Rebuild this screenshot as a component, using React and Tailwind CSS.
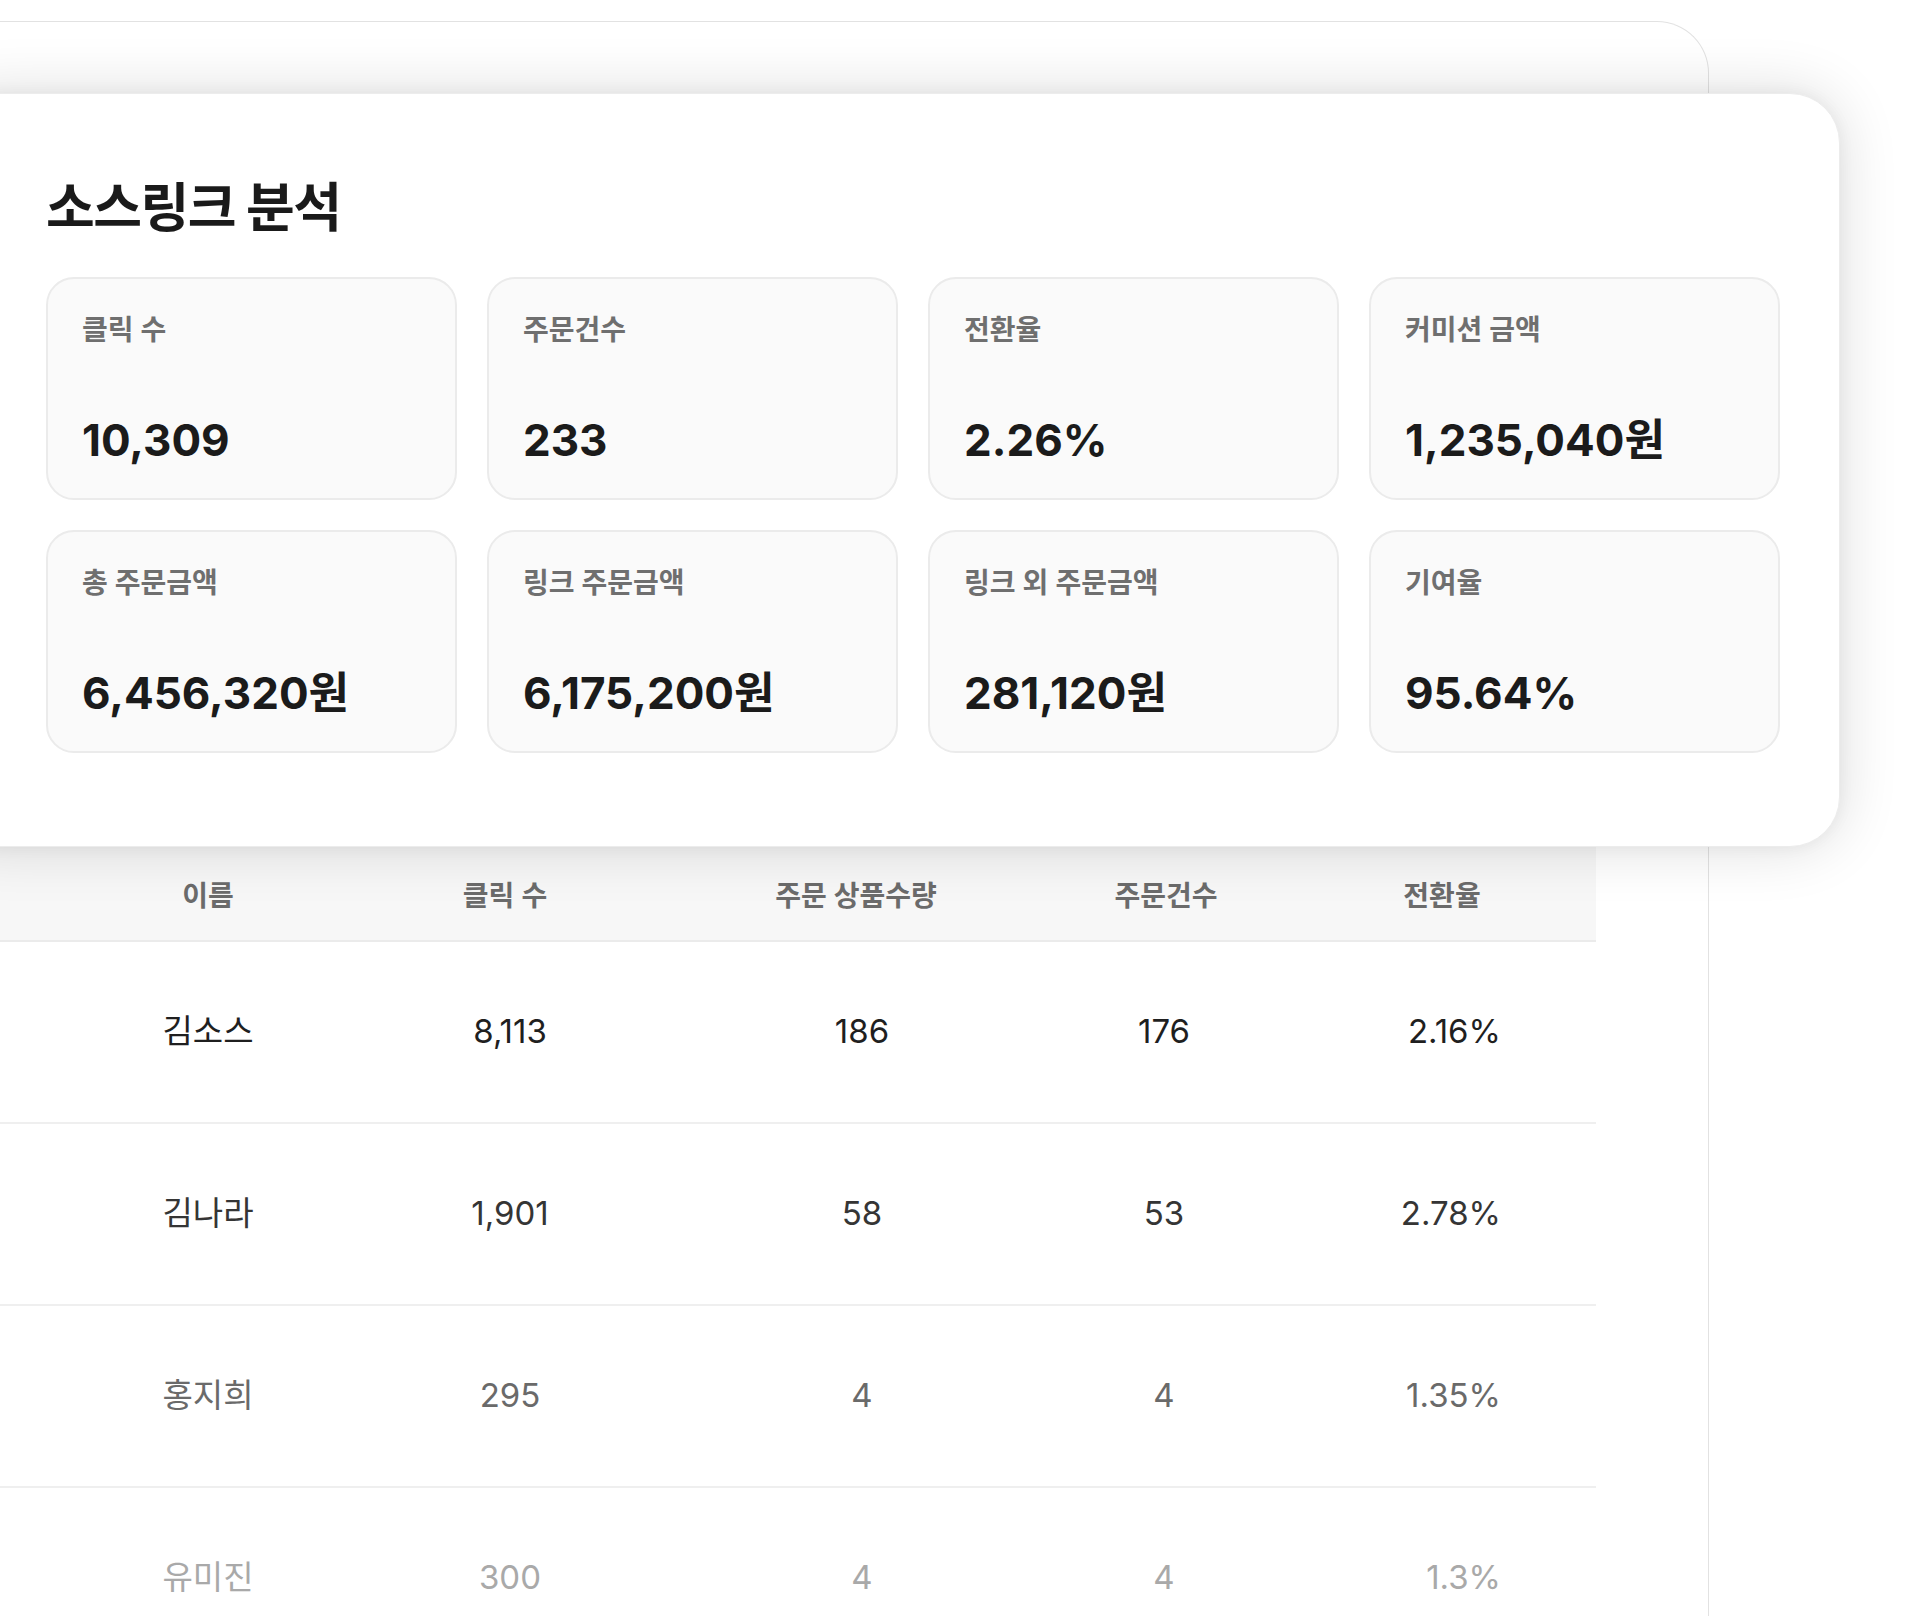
// Source-link analytics: a summary card layered over the per-person table.
const STATS = [
  { label: '클릭 수', value: '10,309' },
  { label: '주문건수', value: '233' },
  { label: '전환율', value: '2.26%' },
  { label: '커미션 금액', value: '1,235,040원' },
  { label: '총 주문금액', value: '6,456,320원' },
  { label: '링크 주문금액', value: '6,175,200원' },
  { label: '링크 외 주문금액', value: '281,120원' },
  { label: '기여율', value: '95.64%' },
]

// margins place each 200px cell so its centre sits under the header
const COLUMNS = [
  { title: '이름', cls: 'ml-[148px] text-center' },
  { title: '클릭 수', cls: 'ml-[97px] text-center', valueCls: 'pl-[10px]' },
  { title: '주문 상품수량', cls: 'ml-[151px] text-center', valueCls: 'pl-[12px]' },
  { title: '주문건수', cls: 'ml-[110px] text-center', valueCls: 'pr-[4px]' },
  { title: '전환율', cls: 'ml-[76px] text-center', valueCls: 'text-right pr-[41px]' },
]

const ROWS = [
  { cells: ['김소스', '8,113', '186', '176', '2.16%'], color: 'text-[#1f1f1f]' },
  { cells: ['김나라', '1,901', '58', '53', '2.78%'], color: 'text-[#353535]' },
  { cells: ['홍지희', '295', '4', '4', '1.35%'], color: 'text-[#6a6a6a]' },
  { cells: ['유미진', '300', '4', '4', '1.3%'], color: 'text-[#a9a9a9]' },
]

function StatCard({ label, value }) {
  return (
    <div className="h-[223px] rounded-[28px] border-2 border-[#ebebeb] bg-[#fafafa] pl-[34px] pt-[33px]">
      <p className="text-[28px] leading-[36px] font-semibold text-[#6f6f6f]">{label}</p>
      <p className="mt-[70px] text-[44px] leading-[45px] font-bold text-[#1b1b1b]">{value}</p>
    </div>
  )
}

function TablePanel() {
  return (
    <div className="ml-[-40px] mt-[21px] w-[1749px] min-h-[1595px] rounded-tr-[52px] border-t border-r border-[#e2e2e2] bg-white pt-[824px] pr-[112px]">
      <div className="flex h-[96px] items-center border-b-2 border-[#ebebeb] bg-[#f7f7f7] pt-[6px]">
        {COLUMNS.map((c) => (
          <div key={c.title} className={`w-[200px] shrink-0 text-[28px] font-semibold text-[#6b6b6b] ${c.cls}`}>
            {c.title}
          </div>
        ))}
      </div>
      {ROWS.map((r) => (
        <div key={r.cells[0]} className={`flex h-[182px] items-center border-b-2 border-[#efefef] text-[33px] ${r.color}`}>
          {r.cells.map((v, i) => (
            <div key={i} className={`w-[200px] shrink-0 ${COLUMNS[i].cls} ${COLUMNS[i].valueCls || ''}`}>
              {v}
            </div>
          ))}
        </div>
      ))}
    </div>
  )
}

export default function App() {
  return (
    <div className="relative h-[1616px] w-full overflow-hidden bg-white font-['Inter','Noto_Sans_CJK_KR',sans-serif]">
      <TablePanel />

      {/* summary card floating over the table */}
      <div className="absolute top-[93px] left-[-60px] h-[754px] w-[1900px] rounded-[50px] border border-[#ececec] bg-white pl-[105px] pt-[84px] shadow-[0_0_60px_rgba(0,0,0,0.14),0_0_16px_rgba(0,0,0,0.05)]">
        <h1 className="text-[53px] leading-[60px] font-bold tracking-[-1.5px] text-[#1a1a1a]">소스링크 분석</h1>
        <div className="mt-[39px] grid w-[1734px] grid-cols-4 gap-[30px]">
          {STATS.map((s) => (
            <StatCard key={s.label} {...s} />
          ))}
        </div>
      </div>
    </div>
  )
}
